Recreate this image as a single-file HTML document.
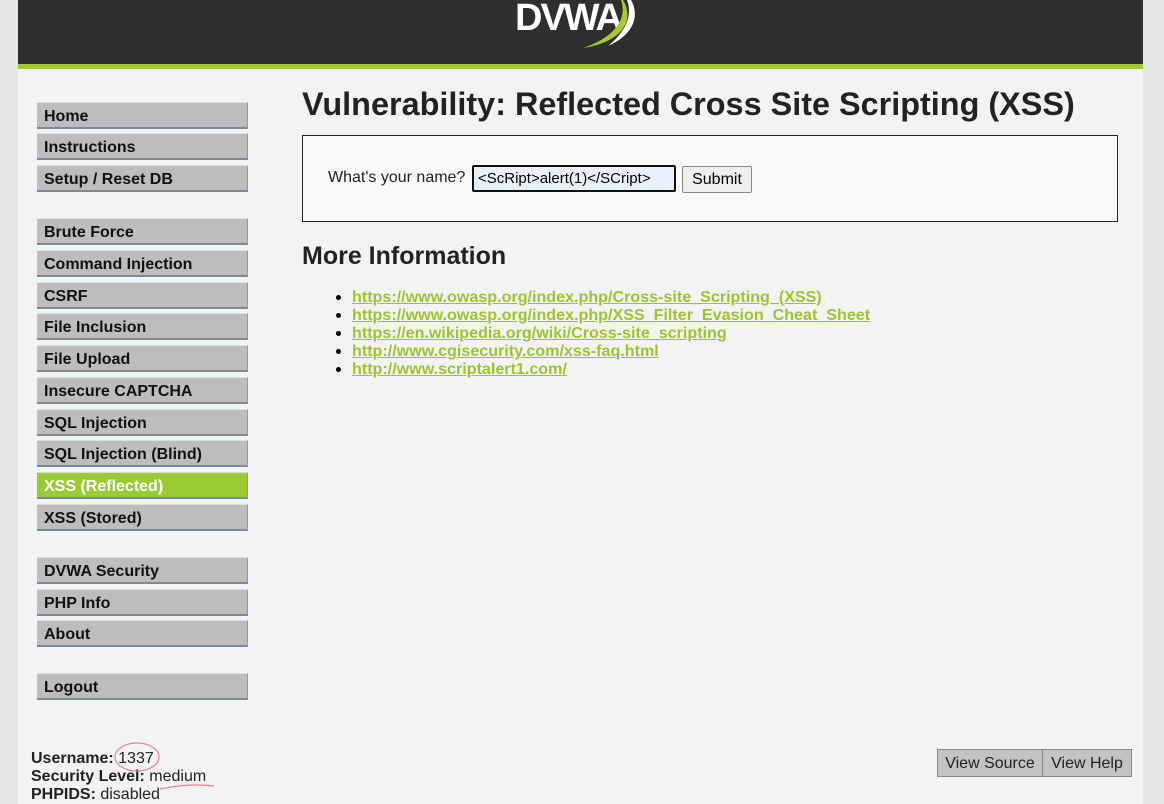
<!DOCTYPE html>
<html><head><meta charset="utf-8"><style>
body{margin:0;background:#e7e7e7;font-family:"Liberation Sans",Arial,sans-serif;width:1164px;height:804px;overflow:hidden;position:relative}
#page{position:absolute;left:18px;top:0;width:1125px;height:804px;background:#f3f3f3}
#hdr{position:absolute;left:0;top:0;width:1125px;height:64px;background:#2f2f2f;border-bottom:5px solid #a2cb33}
.m{position:absolute;left:19px;width:203px;height:24px;background:#bdbdbd;border-top:1px solid #ddd;border-bottom:2px solid #7a8a9a;border-right:1px solid #999;font-weight:bold;font-size:16px;line-height:28px;padding-left:7px;box-sizing:content-box;color:#111}
.m.sel{background:#9acb34;color:#fff}
h1{position:absolute;left:284px;top:86px;margin:0;font-size:32.4px;color:#222}
#box{position:absolute;left:284px;top:135px;width:814px;height:85px;border:1px solid #222;background:#f9f9f9}
h2{position:absolute;left:284px;top:242px;margin:0;font-size:25px;color:#222}
ul{position:absolute;left:316px;top:288px;margin:0;padding:0 0 0 18px;font-size:16.1px;line-height:18px}
a{color:#99c62e;font-weight:bold;text-decoration:underline}
.info{position:absolute;left:13px;font-size:16px;color:#222}
.btn{position:absolute;top:749px;height:26px;background:#c3c3c3;border:1px solid #888;font-size:16px;line-height:28px;text-align:center;color:#222}
</style></head><body>
<div id="page">
<div id="hdr"><svg style="position:absolute;left:495px;top:0" width="135" height="52" viewBox="0 0 135 52">
<text x="2" y="30" font-family="Liberation Sans" font-weight="bold" font-size="38" fill="#fff" letter-spacing="-2">DVWA</text>
<path d="M110 0 C122 20,110 42,70 48 C100 38,115 20,108 0Z" fill="#a2cb33"/>
<path d="M118 0 C128 18,118 36,95 46 C112 32,120 16,114 0Z" fill="#fff"/></svg></div>
<div class="m" style="top:102px">Home</div>
<div class="m" style="top:133px">Instructions</div>
<div class="m" style="top:165px">Setup / Reset DB</div>
<div class="m" style="top:218px">Brute Force</div>
<div class="m" style="top:250px">Command Injection</div>
<div class="m" style="top:282px">CSRF</div>
<div class="m" style="top:313px">File Inclusion</div>
<div class="m" style="top:345px">File Upload</div>
<div class="m" style="top:377px">Insecure CAPTCHA</div>
<div class="m" style="top:409px">SQL Injection</div>
<div class="m" style="top:440px">SQL Injection (Blind)</div>
<div class="m sel" style="top:472px">XSS (Reflected)</div>
<div class="m" style="top:504px">XSS (Stored)</div>
<div class="m" style="top:557px">DVWA Security</div>
<div class="m" style="top:589px">PHP Info</div>
<div class="m" style="top:620px">About</div>
<div class="m" style="top:673px">Logout</div>
<h1>Vulnerability: Reflected Cross Site Scripting (XSS)</h1>
<div id="box">
<span style="position:absolute;left:25px;top:33px;font-size:16px;color:#222">What's your name?</span>
<div style="position:absolute;left:169px;top:29px;width:196px;height:23px;border:2px solid #111;border-radius:2px;background:#e8f0fe;font-size:15px;line-height:24px;padding-left:4px;box-sizing:content-box;overflow:hidden;white-space:nowrap">&lt;ScRipt&gt;alert(1)&lt;/SCript&gt;</div>
<div style="position:absolute;left:379px;top:30px;width:68px;height:25px;border:1px solid #888;border-radius:2px;background:#efefef;font-size:16px;line-height:25px;text-align:center">Submit</div>
</div>
<h2>More Information</h2>
<ul>
<li><a>https://www.owasp.org/index.php/Cross-site_Scripting_(XSS)</a></li>
<li><a>https://www.owasp.org/index.php/XSS_Filter_Evasion_Cheat_Sheet</a></li>
<li><a>https://en.wikipedia.org/wiki/Cross-site_scripting</a></li>
<li><a>http://www.cgisecurity.com/xss-faq.html</a></li>
<li><a>http://www.scriptalert1.com/</a></li>
</ul>
<div class="info" style="top:750px"><b>Username:</b> 1337</div>
<div class="info" style="top:768px"><b>Security Level:</b> medium</div>
<div class="info" style="top:786px"><b>PHPIDS:</b> disabled</div>
<svg style="position:absolute;left:0;top:735px" width="220" height="69"><ellipse cx="119" cy="22" rx="22" ry="14" fill="none" stroke="#f08080" stroke-width="1.2"/><path d="M142 54 Q170 48 196 51" fill="none" stroke="#f08080" stroke-width="1.2"/></svg>
<div class="btn" style="left:919px;width:104px">View Source</div>
<div class="btn" style="left:1024px;width:88px">View Help</div>
</div>
</body></html>
